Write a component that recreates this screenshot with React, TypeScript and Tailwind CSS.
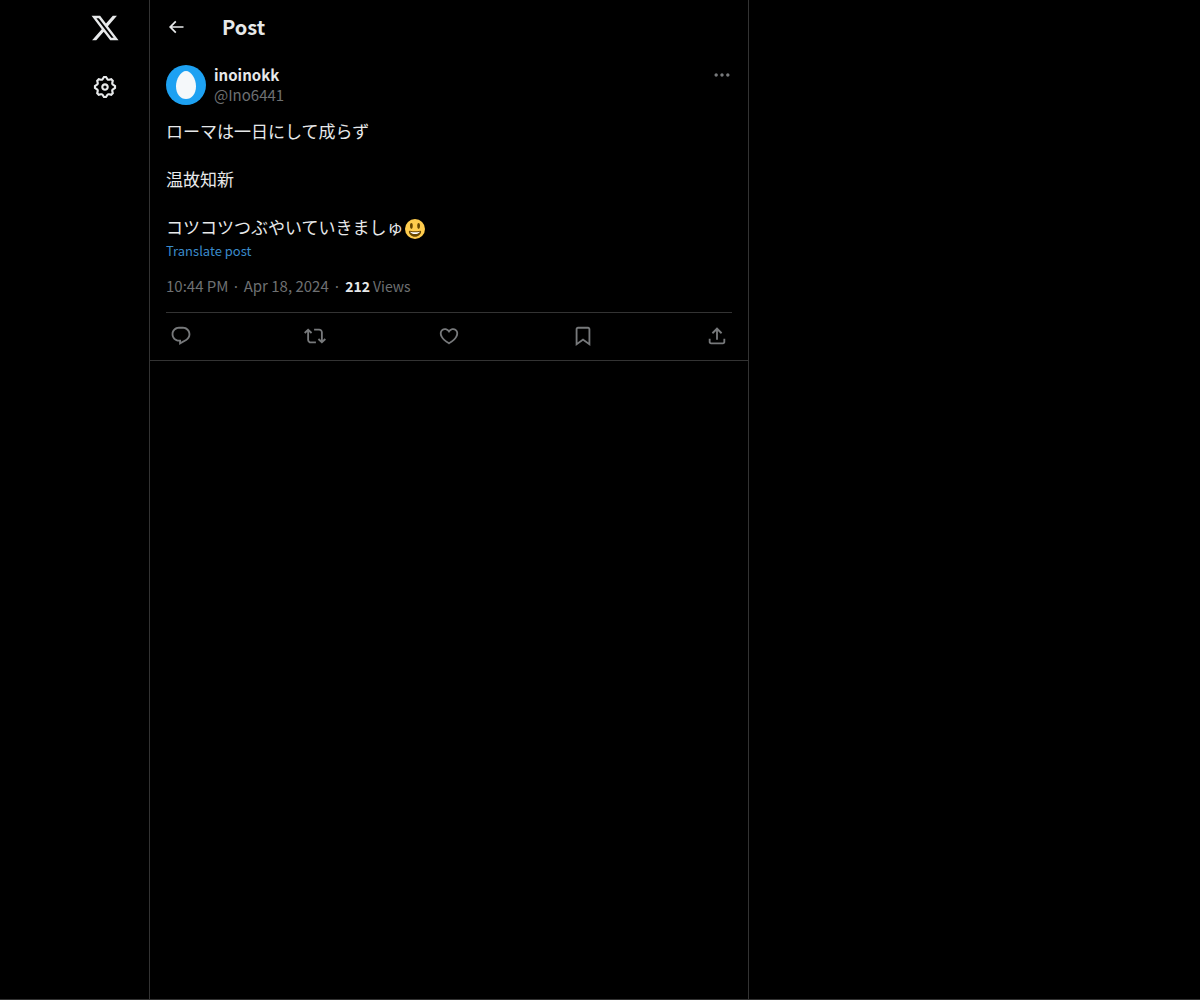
import type { ReactNode } from "react";

const paths = {
  logo: "M18.244 2.25h3.308l-7.227 8.26 8.502 11.24H16.17l-5.214-6.817L4.99 21.75H1.68l7.73-8.835L1.254 2.25H8.08l4.713 6.231zm-1.161 17.52h1.833L7.084 4.126H5.117z",
  settings:
    "M10.54 1.75h2.92l1.57 2.36c.11.17.32.25.53.21l2.53-.59 2.17 2.17-.58 2.54c-.05.2.04.41.21.53l2.36 1.57v2.92l-2.36 1.57c-.17.12-.26.33-.21.53l.58 2.54-2.17 2.17-2.53-.59c-.21-.04-.42.04-.53.21l-1.57 2.36h-2.92l-1.58-2.36c-.11-.17-.32-.25-.52-.21l-2.54.59-2.17-2.17.58-2.54c.05-.2-.03-.41-.21-.53l-2.35-1.57v-2.92L4.1 8.97c.18-.12.26-.33.21-.53L3.73 5.9 5.9 3.73l2.54.59c.2.04.41-.04.52-.21l1.58-2.36zm1.07 2l-.98 1.47C10.05 6.08 9 6.5 7.99 6.27l-1.46-.34-.6.6.33 1.46c.24 1.01-.18 2.07-1.05 2.64l-1.46.98v.78l1.46.98c.87.57 1.29 1.63 1.05 2.64l-.33 1.46.6.6 1.46-.34c1.01-.23 2.06.19 2.64 1.05l.98 1.47h.78l.97-1.47c.58-.86 1.63-1.28 2.65-1.05l1.45.34.61-.6-.34-1.46c-.23-1.01.18-2.07 1.05-2.64l1.47-.98v-.78l-1.47-.98c-.87-.57-1.28-1.63-1.05-2.64l.34-1.46-.61-.6-1.45.34c-1.02.23-2.07-.19-2.65-1.05l-.97-1.47h-.78zM12 10.5c-.83 0-1.5.67-1.5 1.5s.67 1.5 1.5 1.5c.83 0 1.5-.67 1.5-1.5s-.67-1.5-1.5-1.5zM8.5 12c0-1.93 1.56-3.5 3.5-3.5 1.93 0 3.5 1.57 3.5 3.5s-1.57 3.5-3.5 3.5c-1.94 0-3.5-1.57-3.5-3.5z",
  back: "M7.414 13l5.043 5.04-1.414 1.42L3.586 12l7.457-7.46 1.414 1.42L7.414 11H21v2H7.414z",
  more: "M3 12c0-1.1.9-2 2-2s2 .9 2 2-.9 2-2 2-2-.9-2-2zm9 2c1.1 0 2-.9 2-2s-.9-2-2-2-2 .9-2 2 .9 2 2 2zm7 0c1.1 0 2-.9 2-2s-.9-2-2-2-2 .9-2 2 .9 2 2 2z",
  reply:
    "M1.751 10c0-4.42 3.584-8 8.005-8h4.366c4.49 0 8.129 3.64 8.129 8.13 0 2.96-1.607 5.68-4.196 7.11l-8.054 4.46v-3.69h-.067c-4.49.1-8.183-3.51-8.183-8.01zm8.005-6c-3.317 0-6.005 2.69-6.005 6 0 3.37 2.77 6.08 6.138 6.01l.351-.01h1.761v2.3l5.087-2.81c1.951-1.08 3.163-3.13 3.163-5.36 0-3.39-2.744-6.13-6.129-6.13H9.756z",
  repost:
    "M4.5 3.88l4.432 4.14-1.364 1.46L5.5 7.55V16c0 1.1.896 2 2 2H13v2H7.5c-2.209 0-4-1.79-4-4V7.55L1.432 9.48.068 8.02 4.5 3.88zM16.5 6H11V4h5.5c2.209 0 4 1.79 4 4v8.45l2.068-1.93 1.364 1.46-4.432 4.14-4.432-4.14 1.364-1.46 2.068 1.93V8c0-1.1-.896-2-2-2z",
  like: "M16.697 5.5c-1.222-.06-2.679.51-3.89 2.16l-.805 1.09-.806-1.09C9.984 6.01 8.526 5.44 7.304 5.5c-1.243.07-2.349.78-2.91 1.91-.552 1.12-.633 2.78.479 4.82 1.074 1.97 3.257 4.27 7.129 6.61 3.87-2.34 6.052-4.64 7.126-6.61 1.111-2.04 1.03-3.7.477-4.82-.561-1.13-1.666-1.84-2.908-1.91zm4.187 7.69c-1.351 2.48-4.001 5.12-8.379 7.67l-.503.3-.504-.3c-4.379-2.55-7.029-5.19-8.382-7.67-1.36-2.5-1.41-4.86-.514-6.67.887-1.79 2.647-2.91 4.601-3.01 1.651-.09 3.368.56 4.798 2.01 1.429-1.45 3.146-2.1 4.796-2.01 1.954.1 3.714 1.22 4.601 3.01.896 1.81.846 4.17-.514 6.67z",
  bookmark:
    "M4 4.5C4 3.12 5.119 2 6.5 2h11C18.881 2 20 3.12 20 4.5v18.44l-8-5.71-8 5.71V4.5zM6.5 4c-.276 0-.5.22-.5.5v14.56l6-4.29 6 4.29V4.5c0-.28-.224-.5-.5-.5h-11z",
  share:
    "M12 2.59l5.7 5.7-1.41 1.42L13 6.41V16h-2V6.41l-3.3 3.3-1.41-1.42L12 2.59zM21 15l-.02 3.51c0 1.38-1.12 2.49-2.5 2.49H5.5C4.11 21 3 19.88 3 18.5V15h2v3.5c0 .28.22.5.5.5h12.98c.28 0 .5-.22.5-.5L19 15h2z",
};

type IconName = keyof typeof paths;

function Icon({ name, className }: { name: IconName; className: string }) {
  return (
    <svg viewBox="0 0 24 24" fill="currentColor" className={className} aria-hidden="true">
      <path d={paths[name]} />
    </svg>
  );
}

function IconButton({ label, children }: { label: string; children: ReactNode }) {
  return (
    <button type="button" aria-label={label} className="cursor-pointer">
      {children}
    </button>
  );
}

function Avatar() {
  return (
    <svg viewBox="0 0 40 40" className="size-10 shrink-0" aria-hidden="true">
      <circle cx="20" cy="20" r="20" fill="#1da1f2" />
      <path
        d="M20 6c5.3 0 10 8.2 10 15.2C30 29 25.600 34 20 34s-10-5-10-12.800C10 14.200 14.700 6 20 6z"
        fill="#f5f8fa"
      />
    </svg>
  );
}

function Smiley() {
  return (
    <svg viewBox="0 0 36 36" className="ml-px inline-block size-5" aria-hidden="true">
      <circle cx="18" cy="18" r="18" fill="#ffcc4d" />
      <ellipse cx="11.5" cy="12.5" rx="2.5" ry="5.5" fill="#664500" />
      <ellipse cx="24.5" cy="12.5" rx="2.5" ry="5.5" fill="#664500" />
      <path
        d="M18 22c-3.623 0-6.027-.422-9-1-.679-.131-2 0-2 2 0 4 4.595 9 11 9 6.404 0 11-5 11-9 0-2-1.321-2.132-2-2-2.973.578-5.377 1-9 1z"
        fill="#664500"
      />
      <path d="M9 23s3 1 9 1 9-1 9-1-2 4-9 4-9-4-9-4z" fill="#fff" />
    </svg>
  );
}

const actions: { label: string; icon: IconName }[] = [
  { label: "Reply", icon: "reply" },
  { label: "Repost", icon: "repost" },
  { label: "Like", icon: "like" },
  { label: "Bookmark", icon: "bookmark" },
  { label: "Share", icon: "share" },
];

export default function App() {
  return (
    <div className="grid min-h-screen grid-cols-8 border-b border-[#333333] bg-black font-['Noto_Sans_CJK_JP','Noto_Sans',sans-serif] text-[#e7e9ea]">
      <header className="col-span-1 flex flex-col items-end border-r border-[#333333] pr-[29px]">
        <a href="#home" aria-label="X" className="flex h-14 items-center">
          <Icon name="logo" className="size-[30px]" />
        </a>
        <a href="#settings" aria-label="Settings" className="mr-[2px] flex h-[62px] items-center">
          <Icon name="settings" className="size-[26px]" />
        </a>
      </header>

      <main className="col-span-4 mr-px border-r border-[#333333]">
        <div className="flex h-[53px] items-center gap-9 px-4">
          <IconButton label="Back">
            <Icon name="back" className="size-5" />
          </IconButton>
          <h1 className="text-xl font-bold">Post</h1>
        </div>

        <article className="border-b border-[#333333] px-4 pt-3">
          <div className="flex items-start gap-2">
            <Avatar />
            <div className="grow text-[15px] leading-5">
              <div className="font-bold">inoinokk</div>
              <div className="text-[#6e7072]">@Ino6441</div>
            </div>
            <IconButton label="More">
              <Icon name="more" className="size-5 text-[#77797b]" />
            </IconButton>
          </div>

          <p lang="ja" className="mt-3.5 text-[17px] leading-6 whitespace-pre-wrap">
            {"ローマは一日にして成らず\n\n温故知新\n\nコツコツつぶやいていきましゅ"}
            <Smiley />
          </p>
          <a href="#translate" className="mt-0.5 block text-[13px] leading-5 text-[#3a8bcb]">
            Translate post
          </a>

          <div className="mt-[15px] mb-4 text-[15px] leading-5 text-[#6e7072]">
            <time dateTime="2024-04-18T22:44">10:44 PM · Apr 18, 2024</time>
            <span className="px-1">·</span>
            <span className="text-sm leading-5">
              <span className="font-bold text-[#e7e9ea]">212</span> Views
            </span>
          </div>

          <div className="flex h-12 items-center justify-between border-t border-[#333333] px-1 pb-0.5 text-[#77797b]">
            {actions.map((action) => (
              <IconButton key={action.label} label={action.label}>
                <Icon name={action.icon} className="size-[22px]" />
              </IconButton>
            ))}
          </div>
        </article>
      </main>
    </div>
  );
}
